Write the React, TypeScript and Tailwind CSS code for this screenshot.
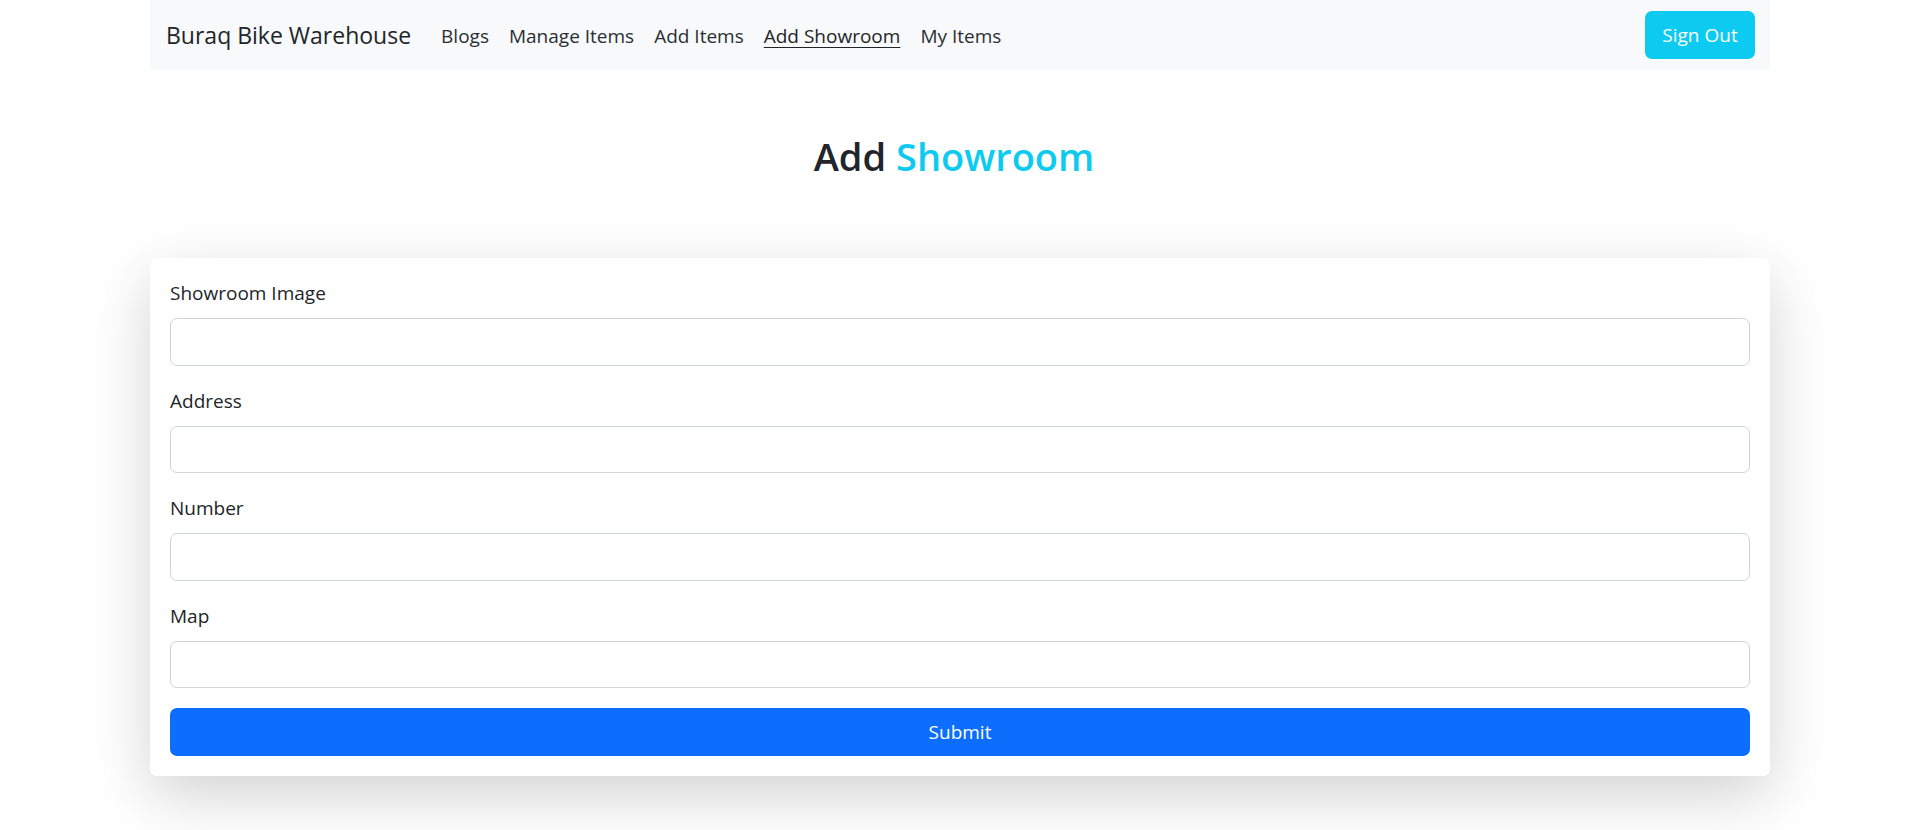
import React from "react";

const font = { fontFamily: '"Open Sans", "Noto Sans", sans-serif' };

function Field({ label }: { label: string }) {
  return (
    <div className="mb-[20px]">
      <label className="block text-[19px] leading-[30px] text-[#212529] mb-[10px]">{label}</label>
      <input
        type="text"
        className="block w-full h-[47.5px] border border-[#ced4da] rounded-[7px] bg-white px-[20px] text-[19px] outline-none"
      />
    </div>
  );
}

export default function App() {
  return (
    <div className="min-h-[830px] bg-white" style={font}>
      <div className="w-[1620px] mx-auto">
        <nav className="h-[70px] bg-[#f8f9fa] flex items-center pl-[16px] pr-[15px]">
          <a className="text-[23px] leading-[37px] text-[#212529] mr-[20px] whitespace-nowrap pt-[1px]">Buraq Bike Warehouse</a>
          <div className="flex items-center text-[19px] leading-[30px] text-[#2b2f33] pt-[2px]">
            <a className="px-[10px]">Blogs</a>
            <a className="px-[10px]">Manage Items</a>
            <a className="px-[10px]">Add Items</a>
            <a className="px-[10px] underline underline-offset-[4px] text-[#212529]">Add Showroom</a>
            <a className="px-[10px]">My Items</a>
          </div>
          <button className="ml-auto h-[47.5px] w-[110px] rounded-[7px] bg-[#0dcaf0] text-white text-[19px] leading-[30px]">
            Sign Out
          </button>
        </nav>

        <h2 className="mt-[62px] pr-[12px] text-center text-[38px] leading-[48px] font-semibold text-[#212529]">
          Add <span className="text-[#0dcaf0]">Showroom</span>
        </h2>

        <div className="mt-[78px] bg-white rounded-[7px] p-[20px] shadow-[0_20px_60px_rgba(0,0,0,0.175)]">
          <Field label="Showroom Image" />
          <Field label="Address" />
          <Field label="Number" />
          <Field label="Map" />
          <button className="block w-full h-[47.5px] rounded-[7px] bg-[#0d6efd] text-white text-[19px] leading-[30px]">
            Submit
          </button>
        </div>
      </div>
    </div>
  );
}
